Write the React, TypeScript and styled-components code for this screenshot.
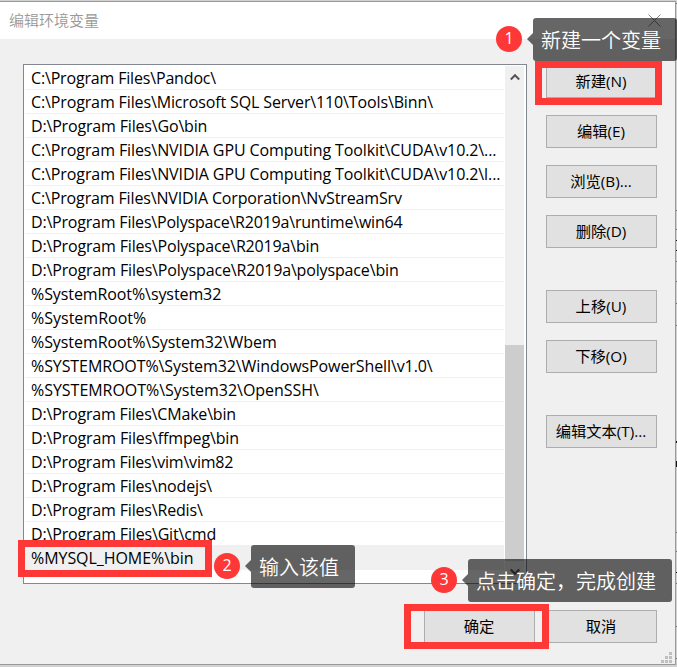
import React from 'react';
import styled, { createGlobalStyle } from 'styled-components';

const Global = createGlobalStyle`
  * { box-sizing: border-box; }
  body { margin: 0; background: #d0d0d0; overflow: hidden; }
`;

const latin = `'Open Sans', 'Noto Sans CJK SC', sans-serif`;
const cjk = `'Noto Sans CJK SC', sans-serif`;

const Screen = styled.div`
  position: relative;
  width: 677px;
  height: 667px;
  padding-top: 1px;
  overflow: hidden;
  background: #d2d2d2;
  font-family: ${latin};
`;

const Dialog = styled.main`
  display: flex;
  flex-direction: column;
  width: 676px;
  height: 664px;
  border: solid #999;
  border-width: 1px 1px 1px 0;
  background: #f0f0f0;
`;

const TitleBar = styled.header`
  display: flex;
  align-items: center;
  justify-content: space-between;
  flex: none;
  height: 37px;
  padding: 0 14px 0 9px;
  background: #fff;
  color: #999;
  font: 350 15px/35px ${cjk};
`;

const Title = styled.span`
  height: 37px;
`;

const Content = styled.div`
  display: flex;
  gap: 19px;
  height: 520px;
  margin: 25px 0 0 23px;
`;

const ListBox = styled.section`
  display: flex;
  width: 504px;
  height: 520px;
  padding: 1px;
  border: 1px solid #828790;
  background: #fff;
`;

const List = styled.ul`
  flex: none;
  width: 479px;
  margin: 0;
  padding: 0;
  list-style: none;
`;

const Row = styled.li<{ $tracking: number; $selected?: boolean }>`
  height: 24px;
  padding-left: 6px;
  border-bottom: 1px solid #f0f0f0;
  background: ${p => (p.$selected ? '#f0f0f0' : '#fff')};
  color: #000;
  font-size: 16px;
  line-height: 24px;
  letter-spacing: ${p => p.$tracking}px;
  white-space: pre;
`;

const ScrollBar = styled.div`
  display: flex;
  flex-direction: column;
  align-items: center;
  width: 19px;
  height: 516px;
  margin-left: 1px;
  background: #f0f0f0;
`;

const ArrowCell = styled.div`
  display: flex;
  align-items: center;
  justify-content: center;
  height: 21px;
`;

const Thumb = styled.div`
  width: 19px;
  height: 216px;
  margin-top: 258px;
  background: #cdcdcd;
`;

const Actions = styled.aside`
  display: flex;
  flex-direction: column;
  gap: 17px;
  padding-top: 1px;
`;

const Button = styled.button<{ $spaced?: boolean }>`
  flex: none;
  width: 111px;
  height: 33px;
  margin: ${p => (p.$spaced ? '25px 0 0' : '0')};
  padding: 0 1px 0 0;
  border: 1px solid #adadad;
  border-radius: 0;
  background: #e1e1e1;
  color: #000;
  font: 400 15.3px/29px ${latin};
  white-space: nowrap;
`;

const Footer = styled.footer`
  display: flex;
  gap: 11px;
  justify-content: flex-end;
  margin: 26px 18px 0 0;
`;

const Frame = styled.div<{ $x: number; $y: number; $w: number; $h: number }>`
  position: absolute;
  left: ${p => p.$x}px;
  top: ${p => p.$y}px;
  width: ${p => p.$w}px;
  height: ${p => p.$h}px;
  border: 7px solid #fe3737;
`;

const Note = styled.div<{ $x: number; $y: number; $w: number }>`
  position: absolute;
  left: ${p => p.$x}px;
  top: ${p => p.$y}px;
  width: ${p => p.$w}px;
  height: 43px;
  padding-left: 8px;
  border-radius: 3px;
  background: rgba(0, 0, 0, 0.6);
  color: #fff;
  font: 350 20px/43px ${cjk};
  white-space: nowrap;

  &::before {
    content: '';
    position: absolute;
    left: -6px;
    top: 15px;
    border: solid transparent;
    border-width: 6px 6px 6px 0;
    border-right-color: rgba(0, 0, 0, 0.6);
  }
`;

const Badge = styled.div<{ $x: number; $y: number }>`
  position: absolute;
  left: ${p => p.$x}px;
  top: ${p => p.$y}px;
  width: 26px;
  height: 26px;
  border-radius: 50%;
  background: #fe3737;
  color: #fff;
  font-size: 16px;
  line-height: 24px;
  text-align: center;
`;

const Grip = styled.svg`
  position: absolute;
  left: 661px;
  top: 652px;
`;

const Backdrop = styled.svg`
  position: absolute;
  left: 676px;
  top: 0;
`;

const paths: [string, number][] = [
  ['C:\\Program Files\\Pandoc\\', -0.17],
  ['C:\\Program Files\\Microsoft SQL Server\\110\\Tools\\Binn\\', -0.13],
  ['D:\\Program Files\\Go\\bin', -0.17],
  ['C:\\Program Files\\NVIDIA GPU Computing Toolkit\\CUDA\\v10.2\\...', -0.1],
  ['C:\\Program Files\\NVIDIA GPU Computing Toolkit\\CUDA\\v10.2\\l...', -0.1],
  ['C:\\Program Files\\NVIDIA Corporation\\NvStreamSrv', -0.14],
  ['D:\\Program Files\\Polyspace\\R2019a\\runtime\\win64', -0.2],
  ['D:\\Program Files\\Polyspace\\R2019a\\bin', -0.17],
  ['D:\\Program Files\\Polyspace\\R2019a\\polyspace\\bin', -0.15],
  ['%SystemRoot%\\system32', -0.09],
  ['%SystemRoot%', 0],
  ['%SystemRoot%\\System32\\Wbem', -0.07],
  ['%SYSTEMROOT%\\System32\\WindowsPowerShell\\v1.0\\', -0.09],
  ['%SYSTEMROOT%\\System32\\OpenSSH\\', -0.03],
  ['D:\\Program Files\\CMake\\bin', -0.18],
  ['D:\\Program Files\\ffmpeg\\bin', -0.15],
  ['D:\\Program Files\\vim\\vim82', -0.19],
  ['D:\\Program Files\\nodejs\\', -0.17],
  ['D:\\Program Files\\Redis\\', -0.17],
  ['D:\\Program Files\\Git\\cmd', -0.16],
  ['%MYSQL_HOME%\\bin', -0.06],
];

export default function App() {
  return (
    <Screen lang="zh-CN">
      <Global />
      <Dialog>
        <TitleBar>
          <Title>编辑环境变量</Title>
          <svg width="13" height="13" viewBox="0 0 13 13" stroke="#888">
            <path d="M.5.5l12 12M12.5.5l-12 12" />
          </svg>
        </TitleBar>
        <Content>
          <ListBox>
            <List>
              {paths.map(([text, tracking], i) => (
                <Row key={i} $tracking={tracking} $selected={i === paths.length - 1}>{text}</Row>
              ))}
            </List>
            <ScrollBar>
              <ArrowCell>
                <svg width="10" height="8" viewBox="0 0 10 8" fill="none" stroke="#555" strokeWidth="2">
                  <path d="M.8 6.5L5 2.2l4.2 4.3" />
                </svg>
              </ArrowCell>
              <Thumb />
              <ArrowCell>
                <svg width="10" height="8" viewBox="0 0 10 8" fill="none" stroke="#555" strokeWidth="2">
                  <path d="M.8 1.5L5 5.8l4.2-4.3" />
                </svg>
              </ArrowCell>
            </ScrollBar>
          </ListBox>
          <Actions>
            <Button>新建(N)</Button>
            <Button>编辑(E)</Button>
            <Button>浏览(B)...</Button>
            <Button>删除(D)</Button>
            <Button $spaced>上移(U)</Button>
            <Button>下移(O)</Button>
            <Button $spaced>编辑文本(T)...</Button>
          </Actions>
        </Content>
        <Footer>
          <Button>确定</Button>
          <Button>取消</Button>
        </Footer>
      </Dialog>
      <Backdrop width="1" height="667">
        <path fill="#777" d="M0 3h1v1H0zM0 210h1v1H0zM0 229h1v1H0zM0 261h1v1H0zM0 281h1v1H0zM0 303h1v1H0zM0 325h1v1H0zM0 532h1v1H0zM0 551h1v1H0zM0 583h1v1H0zM0 626h1v1H0zM0 658h1v1H0z" />
        <path fill="#111" d="M0 240h1v1H0zM0 250h1v1H0zM0 441h1v2H0zM0 461h1v6H0zM0 572h1v1H0z" />
      </Backdrop>
      <Grip width="11" height="11" fill="#bfbfbf">
        <path d="M8 0h3v3H8zM4 4h3v3H4zM8 4h3v3H8zM0 8h3v3H0zM4 8h3v3H4zM8 8h3v3H8z" />
      </Grip>
      <Frame $x={535} $y={61} $w={127} $h={44} />
      <Frame $x={18} $y={540} $w={194} $h={37} />
      <Frame $x={404} $y={604} $w={145} $h={45} />
      <Note $x={533} $y={18} $w={144}>新建一个变量</Note>
      <Note $x={251} $y={545} $w={104}>输入该值</Note>
      <Note $x={468} $y={559} $w={204}>点击确定，完成创建</Note>
      <Badge $x={496} $y={26}>1</Badge>
      <Badge $x={214} $y={553}>2</Badge>
      <Badge $x={431} $y={567}>3</Badge>
    </Screen>
  );
}
